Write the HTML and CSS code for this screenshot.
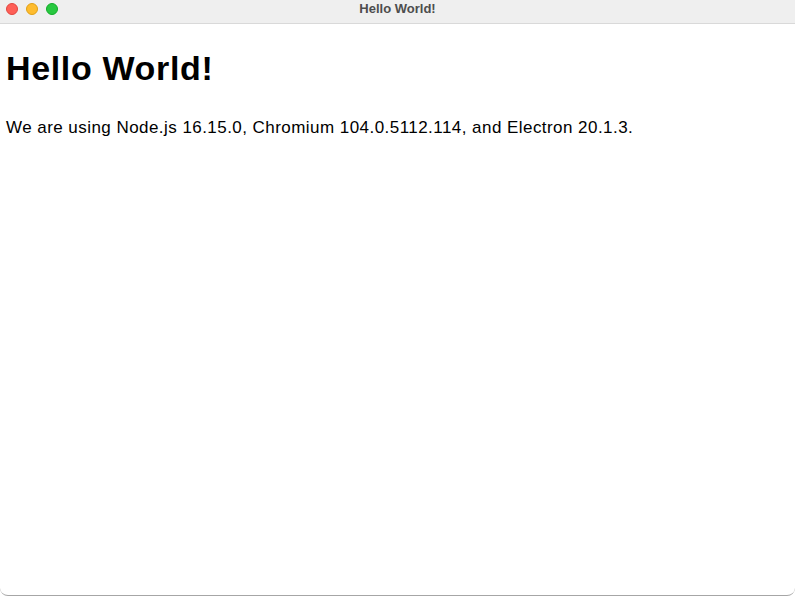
FILE: index.html
```html
<!DOCTYPE html>
<html>
<head>
<meta charset="utf-8">
<link rel="stylesheet" href="styles.css">
</head>
<body>
<div class="window">
  <div class="titlebar">
    <div class="lights">
      <span class="light red"></span>
      <span class="light yellow"></span>
      <span class="light green"></span>
    </div>
    <div class="title">Hello World!</div>
  </div>
  <div class="content">
    <h1 class="heading">Hello World!</h1>
    <p class="text">We are using Node.js 16.15.0, Chromium 104.0.5112.114, and Electron 20.1.3.</p>
  </div>
</div>
</body>
</html>
```
FILE: styles.css
```css
html, body {
  margin: 0;
  padding: 0;
  background: #ffffff;
}
.window {
  width: 795px;
  height: 596px;
  box-sizing: border-box;
  border-bottom: 1px solid #a6a6a6;
  border-radius: 0 0 8px 8px;
  overflow: hidden;
  display: flex;
  flex-direction: column;
}
.titlebar {
  position: relative;
  height: 23px;
  background: #efefef;
  border-bottom: 1px solid #d9d9d9;
  display: flex;
  align-items: center;
  justify-content: center;
  flex-shrink: 0;
}
.lights {
  position: absolute;
  left: 6px;
  top: 3px;
  display: flex;
  gap: 8px;
}
.light {
  width: 12px;
  height: 12px;
  border-radius: 50%;
  box-sizing: border-box;
}
.red { background: #fe5f57; border: 0.5px solid #e2463f; }
.yellow { background: #febc2e; border: 0.5px solid #e1a116; }
.green { background: #28c840; border: 0.5px solid #12ac28; }
.title {
  font-family: "Liberation Sans", Arial, sans-serif;
  font-weight: bold;
  font-size: 13px;
  color: #4d4d4d;
  margin-top: -6px;
}
.content {
  padding: 0 6px;
  font-family: "Liberation Sans", Arial, sans-serif;
  color: #000;
}
.heading {
  font-size: 34px;
  font-weight: bold;
  letter-spacing: 0.65px;
  margin: 20px 0 0 0;
  line-height: 48px;
}
.text {
  font-size: 17px;
  letter-spacing: 0.45px;
  margin: 24px 0 0 0;
  line-height: 24px;
}
```
